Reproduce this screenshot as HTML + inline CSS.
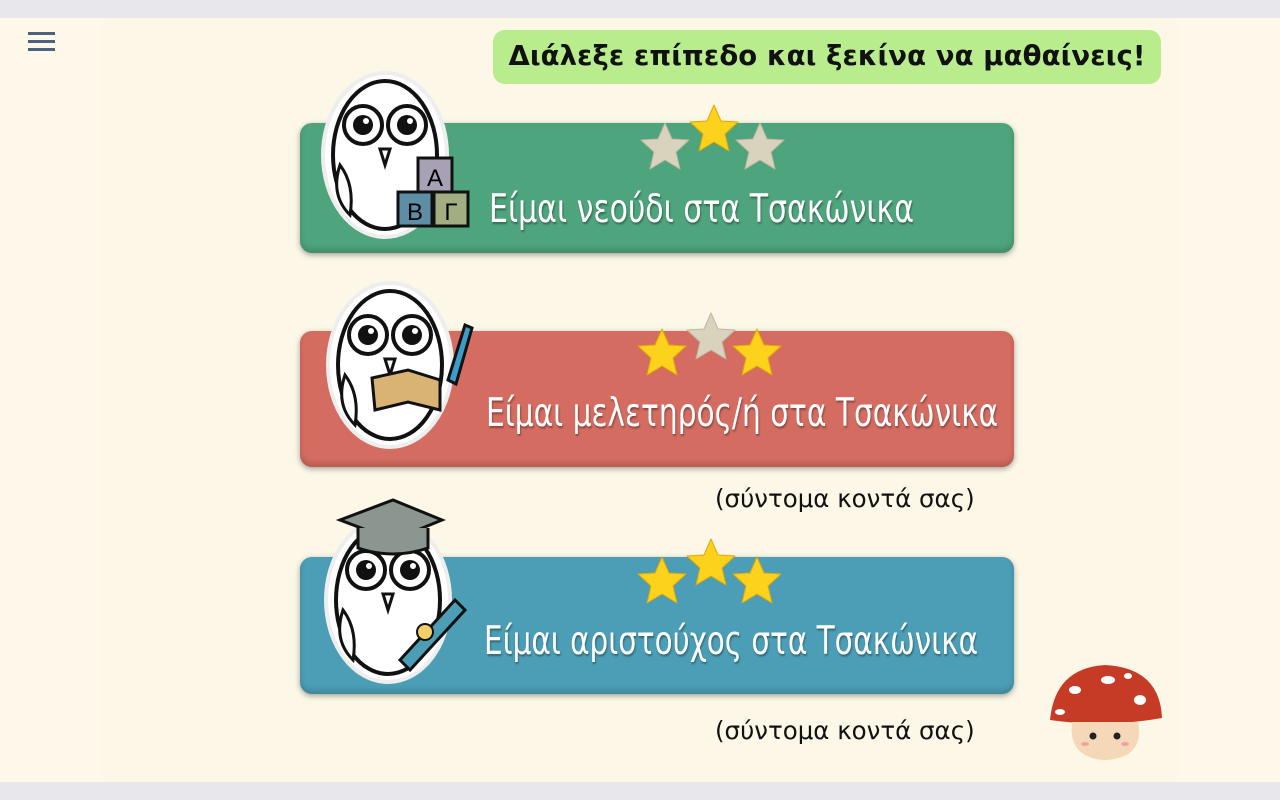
<!DOCTYPE html>
<html><head><meta charset="utf-8"><style>
html,body{margin:0;padding:0}
body{width:1280px;height:800px;position:relative;overflow:hidden;background:#fdf8ea;font-family:"Liberation Sans","DejaVu Sans",sans-serif}
.bar{position:absolute;left:0;width:1280px;height:18px;background:#e7e7ec}
.panel{position:absolute;left:100px;top:18px;width:1080px;height:764px;background:#fcf7e7}
.ham{position:absolute;left:28px;width:27px;height:3px;background:#4c6380}
.title{position:absolute;left:493px;top:30px;width:668px;height:54px;background:#b9ec8c;border-radius:12px;font:bold 27.5px "DejaVu Sans",sans-serif;line-height:52px;text-align:center;color:#111;letter-spacing:0.1px}
.btn{position:absolute;left:300px;width:714px;border-radius:12px;box-shadow:0 2px 6px rgba(0,0,0,.35), inset 0 -4px 6px rgba(0,0,0,.15);color:#fff;font-family:"DejaVu Sans Condensed","Liberation Sans Narrow","DejaVu Sans",sans-serif;font-size:39px;text-shadow:1px 2px 2px rgba(0,0,0,.35)}
.btn span{position:absolute;white-space:nowrap;transform-origin:left}
.soon{position:absolute;left:715px;font-size:24.5px;color:#111;font-family:"DejaVu Sans",sans-serif}
</style></head><body>
<div class="bar" style="top:0"></div><div class="bar" style="top:782px"></div>
<div class="panel"></div>
<div class="ham" style="top:32px"></div><div class="ham" style="top:40px"></div><div class="ham" style="top:48px"></div>
<div class="title">Διάλεξε επίπεδο και ξεκίνα να μαθαίνεις!</div>

<div class="btn" style="top:123px;height:130px;background:#4ea47c"><span style="left:189px;top:64px;transform:scaleX(.855)">Είμαι νεούδι στα Τσακώνικα</span></div>
<div class="btn" style="top:331px;height:136px;background:#d56c61"><span style="left:186px;top:60px;transform:scaleX(.845)">Είμαι μελετηρός/ή στα Τσακώνικα</span></div>
<div class="btn" style="top:557px;height:137px;background:#4b9eb6"><span style="left:184px;top:62px;transform:scaleX(.84)">Είμαι αριστούχος στα Τσακώνικα</span></div>
<div class="soon" style="top:484px">(σύντομα κοντά σας)</div>
<div class="soon" style="top:716px">(σύντομα κοντά σας)</div>

<svg width="1280" height="800" style="position:absolute;left:0;top:0">
<defs>
<path id="st" d="M0,-25 L7,-9 L24,-8 L11,4 L15,21 L0,12 L-15,21 L-11,4 L-24,-8 L-7,-9Z" stroke-linejoin="round"/>
<g id="owl">
<ellipse cx="0" cy="0" rx="62" ry="82" fill="#fff" stroke="#eee" stroke-width="4"/>
<ellipse cx="0" cy="0" rx="52" ry="74" fill="#fff" stroke="#111" stroke-width="4"/>
<circle cx="-22" cy="-30" r="19" fill="#fff" stroke="#111" stroke-width="4"/>
<circle cx="22" cy="-30" r="19" fill="#fff" stroke="#111" stroke-width="4"/>
<circle cx="-22" cy="-30" r="10" fill="#111"/><circle cx="22" cy="-30" r="10" fill="#111"/>
<circle cx="-19" cy="-34" r="3" fill="#fff"/><circle cx="25" cy="-34" r="3" fill="#fff"/>
<path d="M-5,-6 L5,-6 L0,10Z" fill="#fff" stroke="#111" stroke-width="3"/>
<path d="M-45,10 Q-30,30 -35,60 Q-55,40 -45,10Z" fill="#fff" stroke="#111" stroke-width="3"/>
</g>
</defs>
<g fill="#d9d3bd" stroke="#bfb8a2"><use href="#st" x="665" y="148"/><use href="#st" x="760" y="148"/><use href="#st" x="711" y="338"/></g>
<g fill="#fcd21c" stroke="#e6a800"><use href="#st" x="714" y="130"/><use href="#st" x="662" y="354"/><use href="#st" x="757" y="354"/><use href="#st" x="662" y="582"/><use href="#st" x="711" y="564"/><use href="#st" x="757" y="582"/></g>
<use href="#owl" x="385" y="155"/>
<rect x="418" y="158" width="34" height="34" fill="#a8a0b4" stroke="#111" stroke-width="3"/><text x="435" y="186" font-size="24" text-anchor="middle" font-family="Liberation Sans">Α</text>
<rect x="398" y="192" width="34" height="34" fill="#5e8ea5" stroke="#111" stroke-width="3"/><text x="415" y="220" font-size="24" text-anchor="middle" font-family="Liberation Sans">Β</text>
<rect x="434" y="192" width="34" height="34" fill="#a2ad82" stroke="#111" stroke-width="3"/><text x="451" y="220" font-size="24" text-anchor="middle" font-family="Liberation Sans">Γ</text>
<use href="#owl" x="390" y="365"/>
<path d="M372,378 L408,370 L440,380 L440,410 L408,402 L375,410Z" fill="#d8b373" stroke="#111" stroke-width="3"/>
<path d="M448,380 L465,325 L472,328 L456,384Z" fill="#3a9ecb" stroke="#111" stroke-width="3"/>
<use href="#owl" x="388" y="600"/>
<path d="M340,520 L393,500 L442,520 L393,540Z" fill="#8c9690" stroke="#111" stroke-width="3"/>
<path d="M358,528 L358,548 Q393,560 428,548 L428,528" fill="#8c9690" stroke="#111" stroke-width="3"/>
<path d="M400,660 L455,600 L465,610 L410,670Z" fill="#4b9eb6" stroke="#111" stroke-width="3"/>
<circle cx="425" cy="632" r="8" fill="#f3cf6a" stroke="#111" stroke-width="2"/>
<path d="M1050,720 Q1055,668 1105,665 Q1160,668 1162,718 Q1105,728 1050,720Z" fill="#c63b26"/>
<ellipse cx="1075" cy="690" rx="6" ry="4" fill="#fff"/><ellipse cx="1108" cy="680" rx="7" ry="4" fill="#fff"/><ellipse cx="1140" cy="700" rx="6" ry="5" fill="#fff"/><ellipse cx="1128" cy="676" rx="4" ry="3" fill="#fff"/><ellipse cx="1060" cy="712" rx="5" ry="3" fill="#fff"/>
<path d="M1072,722 L1138,722 Q1145,758 1105,760 Q1068,758 1072,722Z" fill="#f5d8b8"/>
<circle cx="1093" cy="736" r="3.5" fill="#222"/><circle cx="1117" cy="736" r="3.5" fill="#222"/>
<ellipse cx="1085" cy="744" rx="4" ry="2" fill="#f3a0a0"/><ellipse cx="1125" cy="744" rx="4" ry="2" fill="#f3a0a0"/>
</svg>
</body></html>
